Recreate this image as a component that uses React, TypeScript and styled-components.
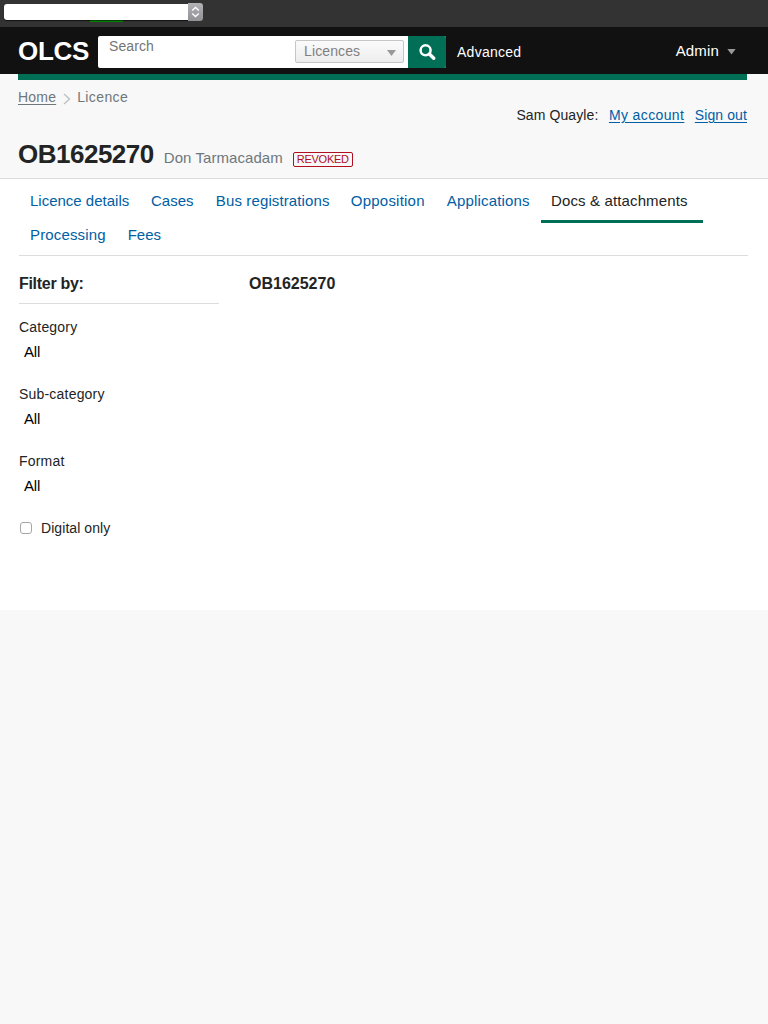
import React from 'react';
import styled, { createGlobalStyle } from 'styled-components';

const GlobalStyle = createGlobalStyle`
  * { box-sizing: border-box; }
  body {
    margin: 0;
    background: #f8f8f8;
    color: #222424;
    font: 14px/20px "Liberation Sans", Arial, sans-serif;
    -webkit-font-smoothing: antialiased;
  }
  h1, h2, h3, p { margin: 0; }
`;

const DevBar = styled.div`
  height: 27px;
  padding: 3px 0 0 4px;
  background: #333;
`;

const DevSelect = styled.div`
  position: relative;
  display: flex;
  width: 199px;
  height: 18px;
`;

const DevField = styled.div`
  width: 184px;
  height: 16px;
  margin-top: 1px;
  background: #fff;
  border-radius: 3px 0 0 3px;
  box-shadow: 0 1px 1px #111;
`;

const DevStepper = styled.div`
  display: flex;
  align-items: center;
  justify-content: center;
  width: 15px;
  height: 18px;
  background: linear-gradient(#b2b2b7, #909095);
  border-radius: 0 3px 3px 0;
`;

const DevMark = styled.span`
  position: absolute;
  left: 86px;
  top: 17px;
  width: 33px;
  height: 2px;
  background: linear-gradient(#064006 50%, #008000 50%);
`;

const Header = styled.header`
  display: flex;
  align-items: center;
  height: 47px;
  padding: 0 32px 0 18px;
  background: #111;
  color: #fff;
`;

const Logo = styled.div`
  width: 80px;
  padding-top: 1px;
  font-size: 26px;
  font-weight: bold;
  line-height: 30px;
  letter-spacing: -0.3px;
`;

const SearchForm = styled.form`
  display: flex;
  width: 348px;
  height: 32px;
  margin-top: 3px;
  overflow: hidden;
  border-radius: 2px;
  background: #fff;
`;

const SearchText = styled.span`
  flex: 1;
  padding-left: 11px;
  color: #757575;
  letter-spacing: 0.1px;
`;

const Scope = styled.div`
  display: flex;
  align-items: flex-start;
  justify-content: space-between;
  width: 109px;
  height: 23px;
  margin: 4px 4px 0 0;
  padding: 0 7px 0 8px;
  border: 1px solid #c6c6c6;
  border-radius: 2px;
  background: linear-gradient(#fbfbfb, #ededed);
  color: #808080;
  letter-spacing: 0.12px;
`;

const SearchButton = styled.button`
  display: flex;
  align-items: center;
  justify-content: center;
  width: 38px;
  height: 32px;
  padding: 0 0 1px;
  border: 0;
  background: #006f56;
`;

const Caret = styled.span<{ $top?: number }>`
  width: 9px;
  height: 6px;
  margin-top: ${(p) => p.$top ?? 0}px;
  background: #999;
  clip-path: polygon(0 0, 100% 0, 50% 100%);
`;

const Advanced = styled.span`
  margin: 3px 0 0 11px;
  letter-spacing: 0.27px;
`;

const Admin = styled.div`
  display: flex;
  align-items: center;
  gap: 8px;
  margin-left: auto;
  font-size: 15px;
  letter-spacing: 0.15px;
`;

const Banner = styled.div`
  height: 105px;
  padding: 0 21px 0 18px;
  border-bottom: 1px solid #dcdcdc;
`;

const Stripe = styled.div`
  height: 6px;
  background: #006f56;
`;

const TopRow = styled.div`
  display: flex;
  justify-content: space-between;
`;

const Breadcrumb = styled.nav`
  display: flex;
  align-items: center;
  height: 20px;
  margin-top: 7px;
  color: #6f777b;
  letter-spacing: 0.4px;

  svg { margin: 3px 6px 0 7px; }
`;

const HomeLink = styled.a`
  letter-spacing: 0.2px;
  text-decoration: underline;
  text-underline-offset: 2px;
`;

const Account = styled.div`
  display: flex;
  gap: 10.5px;
  margin-top: 25px;
  letter-spacing: 0.1px;
`;

const Link = styled.a<{ $track?: number }>`
  color: #005ea5;
  letter-spacing: ${(p) => p.$track ?? 0}px;
  text-decoration: underline;
  text-underline-offset: 2px;
`;

const TitleRow = styled.div`
  display: flex;
  align-items: baseline;
  gap: 10px;
  margin-top: 13px;
`;

const Title = styled.h1`
  font-size: 26px;
  line-height: 32px;
  letter-spacing: -0.5px;
`;

const Holder = styled.span`
  color: #6f777b;
  font-size: 15px;
  letter-spacing: 0.07px;
`;

const Status = styled.span`
  height: 15px;
  padding: 0 3px;
  border: 1px solid #b10e1e;
  border-radius: 2px;
  color: #b10e1e;
  font-size: 11px;
  line-height: 13px;
  letter-spacing: -0.28px;
`;

const Content = styled.main`
  height: 431px;
  padding: 0 20px 0 19px;
  background: #fff;
`;

const Tabs = styled.nav`
  display: flex;
  flex-wrap: wrap;
  align-content: flex-start;
  height: 77px;
  padding: 7px 40px 0 1px;
  border-bottom: 1px solid #dcdcdc;
`;

const Tab = styled.a<{ $active?: boolean; $gap: number; $track: number }>`
  height: 37px;
  margin-right: ${(p) => p.$gap}px;
  padding: 5px ${(p) => (p.$active ? 15 : 10)}px 0 10px;
  border-bottom: 3px solid ${(p) => (p.$active ? '#006f56' : 'transparent')};
  color: ${(p) => (p.$active ? '#222424' : '#005ea5')};
  font-size: 15px;
  letter-spacing: ${(p) => p.$track}px;
  &:nth-child(n + 7) { margin-top: -3px; }
`;

const Columns = styled.div`
  display: grid;
  grid-template-columns: 200px 1fr;
  gap: 30px;
  padding-top: 18px;
`;

const Subhead = styled.h3<{ $ruled?: boolean }>`
  height: 30px;
  border-bottom: ${(p) => (p.$ruled ? '1px solid #dcdcdc' : '0')};
  font-size: 16px;
  letter-spacing: ${(p) => (p.$ruled ? '-0.3px' : '0')};
`;

const Filters = styled.div`
  padding-top: 13px;
`;

const Field = styled.div`
  height: 67px;
  letter-spacing: 0.2px;
`;

const Value = styled.div`
  padding: 5px 0 0 5px;
  color: #000;
  font-size: 15px;
  letter-spacing: -0.2px;
`;

const CheckRow = styled.label`
  display: flex;
  align-items: center;
  gap: 9px;
  letter-spacing: 0.07px;
`;

const Checkbox = styled.span`
  width: 12px;
  height: 12px;
  margin-left: 1px;
  border: 1px solid #a6a6a6;
  border-radius: 3px;
  background: #fff;
`;

const tabs = [
  { label: 'Licence details', gap: 1.8, track: 0 },
  { label: 'Cases', gap: 2.3, track: 0 },
  { label: 'Bus registrations', gap: 1.2, track: 0.12 },
  { label: 'Opposition', gap: 2.1, track: 0.22 },
  { label: 'Applications', gap: 1.3, track: 0.17 },
  { label: 'Docs & attachments', active: true, gap: 1, track: 0.13 },
  { label: 'Processing', gap: 2, track: 0.15 },
  { label: 'Fees', gap: 0, track: 0 },
];

export default function App() {
  return (
    <>
      <GlobalStyle />
      <DevBar>
        <DevSelect>
          <DevField />
          <DevStepper>
            <svg width="9" height="12" viewBox="0 0 9 12" fill="none" stroke="#fff" strokeWidth="1.4">
              <path d="M1.2 4.5 4.5 1.5 7.8 4.5M1.2 7.5 4.5 10.5 7.8 7.5" />
            </svg>
          </DevStepper>
          <DevMark />
        </DevSelect>
      </DevBar>
      <Header>
        <Logo>OLCS</Logo>
        <SearchForm>
          <SearchText>Search</SearchText>
          <Scope>
            Licences
            <Caret $top={9} />
          </Scope>
          <SearchButton type="button" aria-label="Search">
            <svg width="18" height="18" viewBox="0 0 18 18" fill="none" stroke="#fff">
              <circle cx="7.6" cy="7.3" r="5" strokeWidth="2.5" />
              <path d="M11.4 11 15.7 15.2" strokeWidth="3.4" strokeLinecap="round" />
            </svg>
          </SearchButton>
        </SearchForm>
        <Advanced>Advanced</Advanced>
        <Admin>
          Admin
          <Caret $top={2} />
        </Admin>
      </Header>
      <Banner>
        <Stripe />
        <TopRow>
          <Breadcrumb>
            <HomeLink>Home</HomeLink>
            <svg width="8" height="12" viewBox="0 0 8 12" fill="none" stroke="#bfc1c3" strokeWidth="1.4">
              <path d="M1 1 6.5 6 1 11" />
            </svg>
            <span>Licence</span>
          </Breadcrumb>
          <Account>
            <span>Sam Quayle:</span>
            <Link $track={0.38}>My account</Link>
            <Link $track={0.1}>Sign out</Link>
          </Account>
        </TopRow>
        <TitleRow>
          <Title>OB1625270</Title>
          <Holder>Don Tarmacadam</Holder>
          <Status>REVOKED</Status>
        </TitleRow>
      </Banner>
      <Content>
        <Tabs>
          {tabs.map((t) => (
            <Tab key={t.label} $active={t.active} $gap={t.gap} $track={t.track}>
              {t.label}
            </Tab>
          ))}
        </Tabs>
        <Columns>
          <aside>
            <Subhead $ruled>Filter by:</Subhead>
            <Filters>
              {['Category', 'Sub-category', 'Format'].map((f) => (
                <Field key={f}>
                  {f}
                  <Value>All</Value>
                </Field>
              ))}
              <CheckRow>
                <Checkbox />
                Digital only
              </CheckRow>
            </Filters>
          </aside>
          <section>
            <Subhead>OB1625270</Subhead>
          </section>
        </Columns>
      </Content>
    </>
  );
}
